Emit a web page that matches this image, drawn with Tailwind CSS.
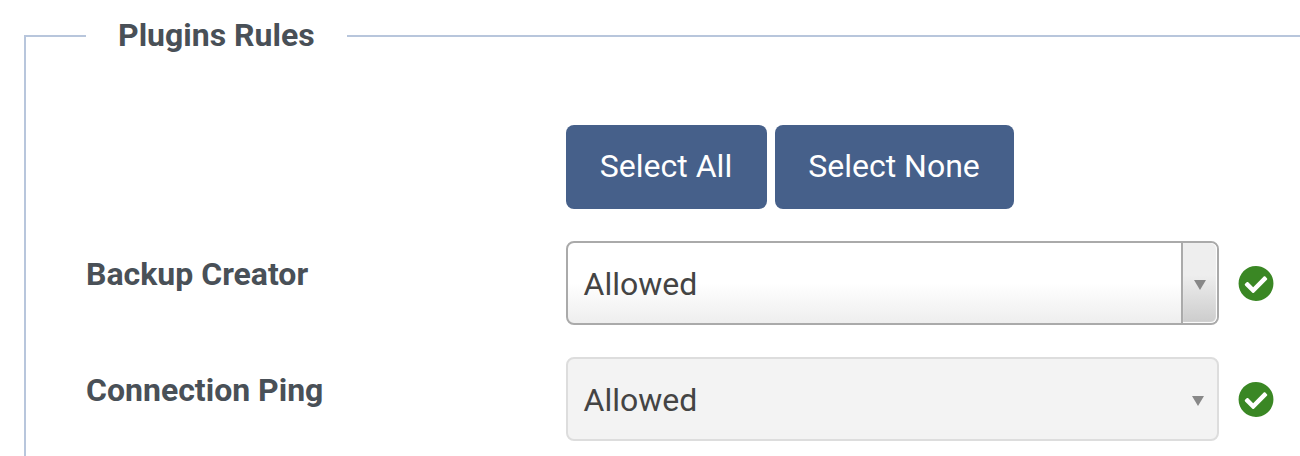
<!DOCTYPE html>
<html lang="en"><head><meta charset="utf-8"><title>Plugins Rules</title>
<script src="https://cdn.jsdelivr.net/npm/@tailwindcss/browser@4"></script></head>
<body class="h-[456px] w-[1300px] overflow-hidden bg-white font-[Roboto,sans-serif] text-[32px] leading-[48px] text-[#495057]">
<svg class="hidden"><symbol id="check" viewBox="0 -7 512 512"><path d="M504 256c0 136.967-111.033 248-248 248S8 392.967 8 256 119.033 8 256 8s248 111.033 248 248zM227.314 387.314l184-184c6.248-6.248 6.248-16.379 0-22.627l-22.627-22.627c-6.248-6.249-16.379-6.249-22.628 0L216 308.118l-70.059-70.059c-6.248-6.248-16.379-6.248-22.628 0l-22.627 22.627c-6.248 6.248-6.248 16.379 0 22.627l104 104c6.249 6.249 16.379 6.249 22.628.001z"/></symbol></svg>
<fieldset class="mt-3 ml-6 h-[444px] w-[1276px] border-t-2 border-l-2 border-[#b8c6dc] pl-[60px]">
<legend class="px-8 pb-[2px] font-bold leading-[46px]">Plugins Rules</legend>
<div class="mt-[65px] ml-[480px] flex gap-2 text-white">
<button class="h-[84px] w-[201px] rounded-[8px] bg-[#46608a] pr-px pb-[2px]">Select All</button>
<button class="h-[84px] w-[239px] rounded-[8px] bg-[#46608a] pr-px pb-[2px]">Select None</button>
</div>
<div class="mt-8 flex">
<label class="w-[480px] pt-[9px] font-bold">Backup Creator</label>
<div class="flex h-[84px] w-[653px] items-center justify-between overflow-hidden rounded-[8px] border-2 border-[#aaa] bg-linear-to-b from-white from-50% to-[#eee] pl-[15.5px] text-[#444]">
<span class="pt-[2px]">Allowed</span>
<span class="flex h-full w-[36px] items-center justify-center rounded-r-[6px] border-l-2 border-[#aaa] bg-linear-to-b from-[#eee] from-40% to-[#ccc] shadow-[inset_-1px_0_1px_#fff,inset_0_-1px_1px_#fff]"><svg class="mt-1 h-[10px] w-3 fill-[#888]" viewBox="0 0 12 10"><path d="M0 0h12L6 10z"/></svg></span>
</div>
<svg class="mt-6 ml-[19px] size-9 fill-[#3a8724]"><use href="#check"/></svg>
</div>
<div class="mt-8 flex">
<label class="w-[480px] pt-[9px] font-bold">Connection Ping</label>
<div class="flex h-[84px] w-[653px] items-center justify-between rounded-[8px] border-2 border-[#ddd] bg-[#f3f3f3] pr-[13px] pl-[15.5px] text-[#444]">
<span class="pt-[2px]">Allowed</span>
<svg class="mt-1 h-[10px] w-3 fill-[#888]" viewBox="0 0 12 10"><path d="M0 0h12L6 10z"/></svg>
</div>
<svg class="mt-6 ml-[19px] size-9 fill-[#3a8724]"><use href="#check"/></svg>
</div>
</fieldset>
</body></html>
